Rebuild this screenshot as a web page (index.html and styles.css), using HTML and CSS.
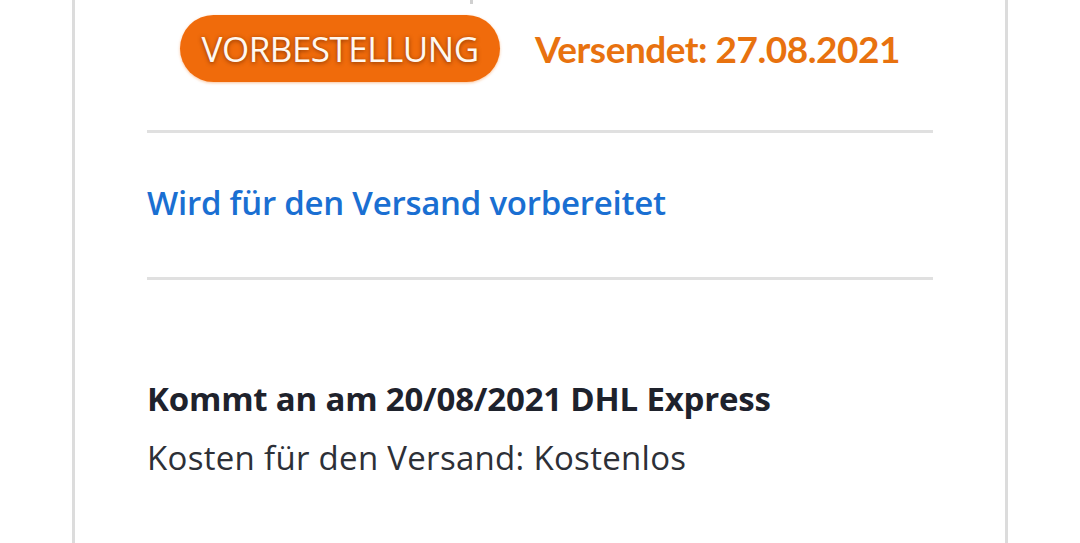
FILE: index.html
```html
<!DOCTYPE html>
<html lang="de">

<head>
    <meta charset="UTF-8">
    <meta name="viewport" content="width=device-width, initial-scale=1.0">
    <title>Bestellung</title>
    <link rel="stylesheet" href="styles.css">
</head>

<body>
    <div class="karte">
        <div class="strich-oben"></div>
        <div class="status-zeile">
            <span class="badge">VORBESTELLUNG</span>
            <span class="versendet">Versendet: 27.08.2021</span>
        </div>
        <hr class="trenner">
        <p class="status-text">Wird für den Versand vorbereitet</p>
        <hr class="trenner">
        <div class="lieferung">
            <p class="ankunft">Kommt an am 20/08/2021 DHL Express</p>
            <p class="kosten">Kosten für den Versand: Kostenlos</p>
        </div>
    </div>
</body>

</html>
```

FILE: styles.css
```css
:root {
    --rahmen: #dcdcdc;
    --orange: #f06b0b;
    --orange-text: #e8720f;
    --blau: #1a6fd2;
    --dunkel: #1e222c;
}

html,
body {
    margin: 0;
    padding: 0;
    background-color: #ffffff;
    font-family: 'Open Sans', 'Noto Sans', sans-serif;
    overflow: hidden;
}

.karte {
    margin-left: 72px;
    height: 543px;
    border-left: 3px solid var(--rahmen);
    border-right: 3px solid var(--rahmen);
    padding: 0 72px 0 72px;
    box-sizing: content-box;
    width: 786px;
}

.strich-oben {
    width: 3px;
    height: 4px;
    margin-left: 323px;
    background-color: #d0d0d0;
    margin-bottom: 11px;
}

.status-zeile {
    display: flex;
    justify-content: center;
    align-items: center;
    gap: 35px;
}

.badge {
    display: flex;
    align-items: center;
    justify-content: center;
    width: 320px;
    height: 67px;
    border-radius: 34px;
    background-color: var(--orange);
    color: #fff8f0;
    font-size: 35px;
    letter-spacing: -0.5px;
    text-shadow: 0 1px 4px rgba(90, 30, 0, 0.7);
    box-shadow: 0 1px 3px rgba(240, 107, 11, 0.4);
}

.versendet {
    font-family: 'Lato', sans-serif;
    font-weight: 700;
    font-size: 37px;
    color: var(--orange-text);
    letter-spacing: -0.5px;
}

.trenner {
    border: none;
    height: 3px;
    background-color: #e0e0e0;
    margin: 0;
}

.status-zeile + .trenner {
    margin-top: 48px;
}

.status-text {
    margin: 0;
    padding: 50px 0 54px 0;
    font-size: 33px;
    font-weight: 600;
    color: var(--blau);
    letter-spacing: -0.25px;
    line-height: 40px;
}

.lieferung {
    padding-top: 96px;
}

.ankunft {
    margin: 0;
    font-size: 33px;
    font-weight: 700;
    color: var(--dunkel);
    line-height: 46px;
    letter-spacing: -0.2px;
}

.kosten {
    margin: 14px 0 0;
    font-size: 33px;
    color: #2d3037;
    line-height: 44px;
    letter-spacing: 0.3px;
}
```
